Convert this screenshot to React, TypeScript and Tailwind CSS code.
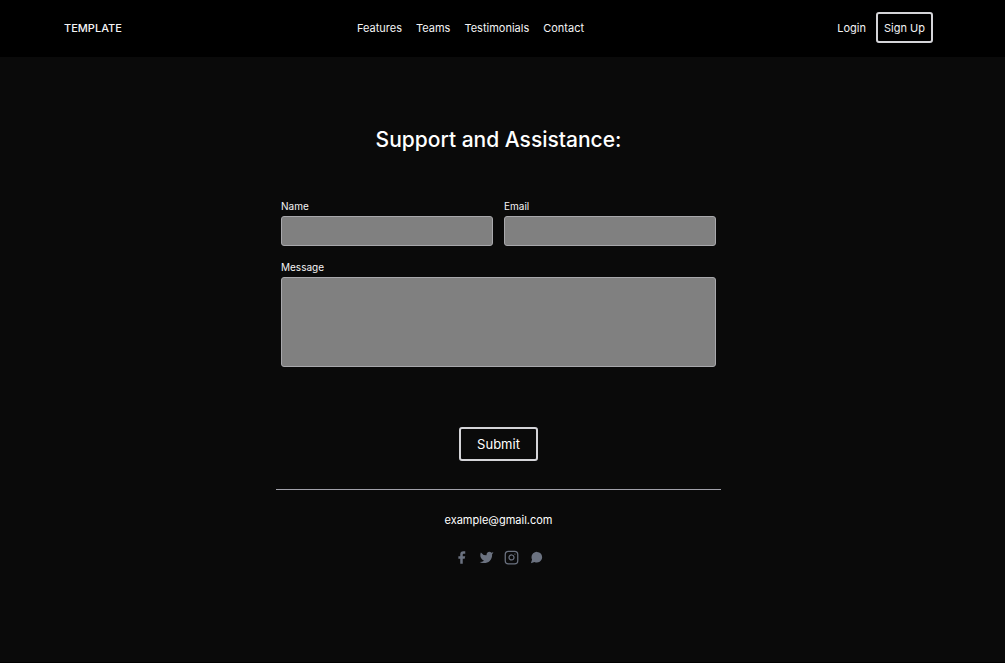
import type { ReactNode } from 'react';

const navLinks = [
  { name: 'Features', href: '#features' },
  { name: 'Teams', href: '#teams' },
  { name: 'Testimonials', href: '#testimonials' },
  { name: 'Contact', href: '#contact' },
];

const fieldClass =
  'block w-full rounded-[3px] border border-[#a8a8ac] bg-[#808080] px-3 text-sm text-white outline-none focus:border-white';

function Header() {
  return (
    <header className="bg-black text-[11px] leading-4 text-[#f4f4f5]">
      <div className="flex h-[57px] items-center pl-16 pr-[72px] pb-0.5">
        <div className="flex-1">
          <a href="#home" className="font-medium">TEMPLATE</a>
        </div>
        <nav className="-ml-14 flex gap-3.5">
          {navLinks.map((link) => (
            <a key={link.name} href={link.href} className="hover:text-gray-400">
              {link.name}
            </a>
          ))}
        </nav>
        <div className="flex flex-1 items-center justify-end gap-[10px]">
          <a href="#login" className="hover:text-gray-400">Login</a>
          <button type="button" className="h-[31px] rounded-[3px] border-2 border-[#d4d4d8] px-1.5 hover:bg-gray-800">
            Sign Up
          </button>
        </div>
      </div>
    </header>
  );
}

function SocialLink({ label, filled = true, children }: { label: string; filled?: boolean; children: ReactNode }) {
  return (
    <a href="#social" aria-label={label} className="text-[#6b7280] hover:text-gray-300">
      <svg
        className="h-[15px] w-[15px]"
        viewBox="0 0 24 24"
        fill="currentColor"
        fillOpacity={filled ? 1 : 0}
        stroke="currentColor"
        strokeLinecap="round"
        strokeLinejoin="round"
        strokeWidth={filled ? 0 : 2}
      >
        {children}
      </svg>
    </a>
  );
}

function ContactForm() {
  return (
    <form onSubmit={(e) => e.preventDefault()}>
      <div className="grid grid-cols-2 gap-x-[11px] gap-y-[13px] px-[5px] text-[10px] leading-4 text-[#f4f4f5]">
        <div>
          <label htmlFor="name" className="block pb-0.5">Name</label>
          <input id="name" name="name" type="text" className={`${fieldClass} h-[30px]`} />
        </div>
        <div>
          <label htmlFor="email" className="block pb-0.5">Email</label>
          <input id="email" name="email" type="email" className={`${fieldClass} h-[30px]`} />
        </div>
        <div className="col-span-2">
          <label htmlFor="message" className="block pb-0.5">Message</label>
          <textarea id="message" name="message" className={`${fieldClass} h-[90px] resize-none py-1`} />
        </div>
      </div>
      <div className="mt-[60px] flex justify-center">
        <button
          type="submit"
          className="h-[34px] rounded-[3px] border-2 border-[#d4d4d8] px-4 text-[13px] leading-5 text-white hover:bg-gray-800"
        >
          Submit
        </button>
      </div>
    </form>
  );
}

export default function App() {
  return (
    <div className="flex min-h-screen flex-col border-b border-black bg-[#0a0a0a] font-['Inter',sans-serif] text-white">
      <Header />
      <main className="flex-1 pr-2 pt-[67px] pb-16">
        <h1 className="text-center text-[21px] leading-8 font-medium">Support and Assistance:</h1>
        <div className="mx-auto mt-[42px] w-full max-w-[445px]">
          <ContactForm />
          {/* 연락처 */}
          <div className="mt-7 border-t border-[#a1a1aa] pt-[22px] text-center">
            <a href="mailto:example@gmail.com" className="block text-[11px] leading-4">example@gmail.com</a>
            <div className="mt-[22px] flex justify-center gap-[10px]">
              <SocialLink label="Facebook">
                <path d="M18 2h-3a5 5 0 00-5 5v3H7v4h3v8h4v-8h3l1-4h-4V7a1 1 0 011-1h3z" />
              </SocialLink>
              <SocialLink label="Twitter">
                <path d="M23 3a10.9 10.9 0 01-3.14 1.53 4.48 4.48 0 00-7.86 3v1A10.66 10.66 0 013 4s-4 9 5 13a11.64 11.64 0 01-7 2c9 5 20 0 20-11.5a4.5 4.5 0 00-.08-.83A7.72 7.72 0 0023 3z" />
              </SocialLink>
              <SocialLink label="Instagram" filled={false}>
                <rect width="20" height="20" x="2" y="2" rx="5" ry="5" />
                <path d="M16 11.37A4 4 0 1112.63 8 4 4 0 0116 11.37zm1.5-4.87h.01" />
              </SocialLink>
              <SocialLink label="Chat">
                <path d="M21 11.5a8.38 8.38 0 01-.9 3.8 8.5 8.5 0 01-7.6 4.7 8.38 8.38 0 01-3.8-.9L3 21l1.9-5.7a8.38 8.38 0 01-.9-3.8 8.5 8.5 0 014.7-7.6 8.38 8.38 0 013.8-.9h.5a8.48 8.48 0 018 8v.5z" />
              </SocialLink>
            </div>
          </div>
        </div>
      </main>
    </div>
  );
}
